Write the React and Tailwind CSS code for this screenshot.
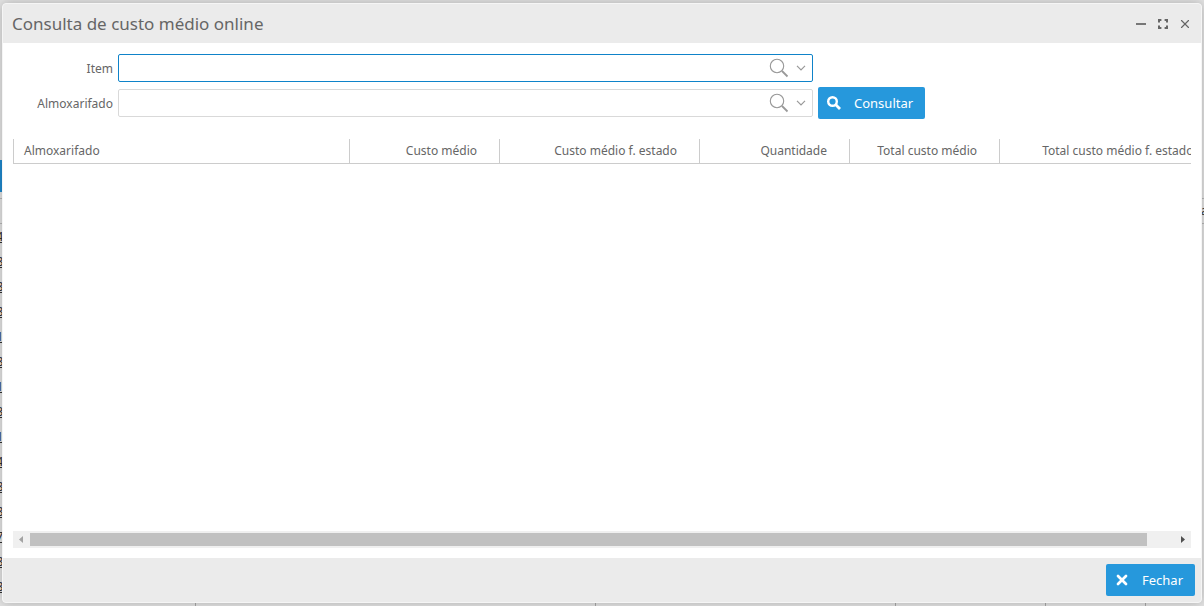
import React from "react";
import { X } from "lucide-react";

const columns = [
  { label: "Almoxarifado", width: "w-[336px]", align: "text-left" },
  { label: "Custo médio", width: "w-[150px]", align: "text-right" },
  { label: "Custo médio f. estado", width: "w-[200px]", align: "text-right" },
  { label: "Quantidade", width: "w-[150px]", align: "text-right" },
  { label: "Total custo médio", width: "w-[150px]", align: "text-right" },
  { label: "Total custo médio f. estado", width: "w-[216px]", align: "text-right" },
];

const backgroundCodes = ["4", "8", "8", "8", "1", "8", "1", "3", "1", "4", "8", "8", "7", "8", "8"];

function Background() {
  return (
    <div aria-hidden="true" className="absolute inset-0 overflow-hidden bg-[#e4e4e4] text-[13px] text-[#333333]">
      <div className="h-40" />
      <div className="h-8 w-24 bg-[#1f8ad0]" />
      <div className="mt-1.5 flex h-[26px] items-center justify-end border-y border-[#b8b8b8]">
        <span className="-mr-1">a</span>
      </div>
      {backgroundCodes.map((code, i) => (
        <div key={i} className="-ml-1 h-[25px] leading-[25px] underline">
          {code}
        </div>
      ))}
      <div className="flex h-8">
        <div className="w-[196px] border-r border-[#a8a8a8]" />
        <div className="w-[400px] border-r border-[#a8a8a8]" />
        <div className="w-[300px] border-r border-[#a8a8a8]" />
        <div className="w-[150px] border-r border-[#a8a8a8]" />
        <div className="w-[100px] border-r border-[#a8a8a8]" />
      </div>
    </div>
  );
}

function LookupField({ id, label, focused }) {
  return (
    <>
      <label htmlFor={id} className="w-[101px] shrink-0 pt-0.5 text-right">
        {label}
      </label>
      <div
        className={`ml-[5px] flex h-7 w-[695px] items-center rounded-xs border bg-white ${
          focused ? "border-[#0f83c9]" : "border-[#d9d9d9]"
        }`}
      >
        <input id={id} type="text" className="h-full min-w-0 flex-1 px-2 outline-none" />
        <button type="button" aria-label={`Pesquisar ${label}`} className="flex w-[22px] justify-center">
          <svg viewBox="0 0 20 20" className="h-5 w-5 fill-none stroke-[#999999]">
            <circle cx="8" cy="8" r="6.7" strokeWidth="1.1" />
            <path d="M13 13l5.5 5.5" strokeWidth="1.8" />
          </svg>
        </button>
        <button type="button" aria-label={`Abrir lista ${label}`} className="flex w-[22px] justify-center">
          <svg viewBox="0 0 10 6" className="h-1.5 w-2.5 fill-none stroke-[#999999]">
            <path d="M1 0.8l4 4 4-4" strokeWidth="1.2" />
          </svg>
        </button>
      </div>
    </>
  );
}

export default function App() {
  return (
    <div className="relative flex h-screen overflow-hidden px-0.5 py-[3px] font-['Noto_Sans','Open_Sans',sans-serif] text-[12px] text-[#666666]">
      <Background />
      <div
        role="dialog"
        aria-labelledby="dialog-title"
        className="relative flex min-w-0 flex-1 flex-col overflow-hidden rounded-sm border border-[#f5f5f5] bg-white shadow-[0_0_12px_rgba(0,0,0,0.25)]"
      >
        {/* Title bar */}
        <header className="flex h-[39px] shrink-0 items-center justify-between bg-[#ebebeb] px-[9px]">
          <h1 id="dialog-title" className="text-[17px]">
            Consulta de custo médio online
          </h1>
          <div className="flex gap-2">
            <button type="button" aria-label="Minimizar" className="flex h-3.5 w-3.5 items-center justify-center">
              <span className="h-0.5 w-2.5 bg-[#777777]" />
            </button>
            <button type="button" aria-label="Maximizar" className="flex h-3.5 w-3.5 items-center justify-center">
              <svg viewBox="0 0 10 10" className="h-2.5 w-2.5 fill-none stroke-[#666666] stroke-2">
                <path d="M1 3.4V1h2.4M6.6 1H9v2.4M9 6.6V9H6.6M3.4 9H1V6.6" />
              </svg>
            </button>
            <button type="button" aria-label="Fechar janela" className="flex h-3.5 w-3.5 items-center justify-center">
              <X className="h-3.5 w-3.5" />
            </button>
          </div>
        </header>

        {/* Filters */}
        <form className="flex shrink-0 flex-col gap-[3px] pt-[9px] pl-[9px]">
          <div className="flex h-8 items-center">
            <LookupField id="item" label="Item" focused />
          </div>
          <div className="flex h-8 items-center">
            <LookupField id="almoxarifado" label="Almoxarifado" />
            <button
              type="button"
              className="ml-[5px] flex h-8 w-[107px] items-center rounded-xs bg-[#2698dc] pl-2 text-[13px] text-white"
            >
              <svg viewBox="0 0 16 16" className="mr-3 h-4 w-4 fill-none stroke-white">
                <circle cx="6.5" cy="6.5" r="4.3" strokeWidth="2.4" />
                <path d="M9.8 9.8l4.2 4.2" strokeWidth="2.8" />
              </svg>
              <span className="pt-0.5">Consultar</span>
            </button>
          </div>
        </form>

        {/* Results */}
        <div className="mx-2.5 mt-5 flex min-h-0 flex-1 flex-col overflow-hidden">
          <div className="flex-1 overflow-hidden">
            <table className="w-[1202px] table-fixed border-collapse">
              <thead>
                <tr className="h-6 border-b border-[#cccccc]">
                  {columns.map((col) => (
                    <th
                      key={col.label}
                      scope="col"
                      className={`${col.width} ${col.align} border-l border-[#cccccc] pr-[22px] pl-2.5 font-normal whitespace-nowrap`}
                    >
                      {col.label}
                    </th>
                  ))}
                </tr>
              </thead>
              <tbody />
            </table>
          </div>
          <div className="mb-2.5 flex h-[17px] shrink-0 items-center bg-[#f0f0f0]">
            <svg viewBox="0 0 17 17" className="h-[17px] w-[17px] fill-[#a3a3a3]">
              <path d="M10 5v7L6 8.5z" />
            </svg>
            <div className="flex-1">
              <div className="h-[13px] w-[97.6%] bg-[#c1c1c1]" />
            </div>
            <svg viewBox="0 0 17 17" className="h-[17px] w-[17px] fill-[#505050]">
              <path d="M7 5v7l4-3.5z" />
            </svg>
          </div>
        </div>

        {/* Actions */}
        <footer className="flex h-11 shrink-0 items-center justify-end bg-[#ebebeb] pr-1.5">
          <button
            type="button"
            className="flex h-8 w-[89px] items-center rounded-xs bg-[#2698dc] pl-2 text-[13px] text-white"
          >
            <X className="mr-3 h-4 w-4 stroke-[4]" />
            <span className="pt-0.5">Fechar</span>
          </button>
        </footer>
      </div>
    </div>
  );
}
